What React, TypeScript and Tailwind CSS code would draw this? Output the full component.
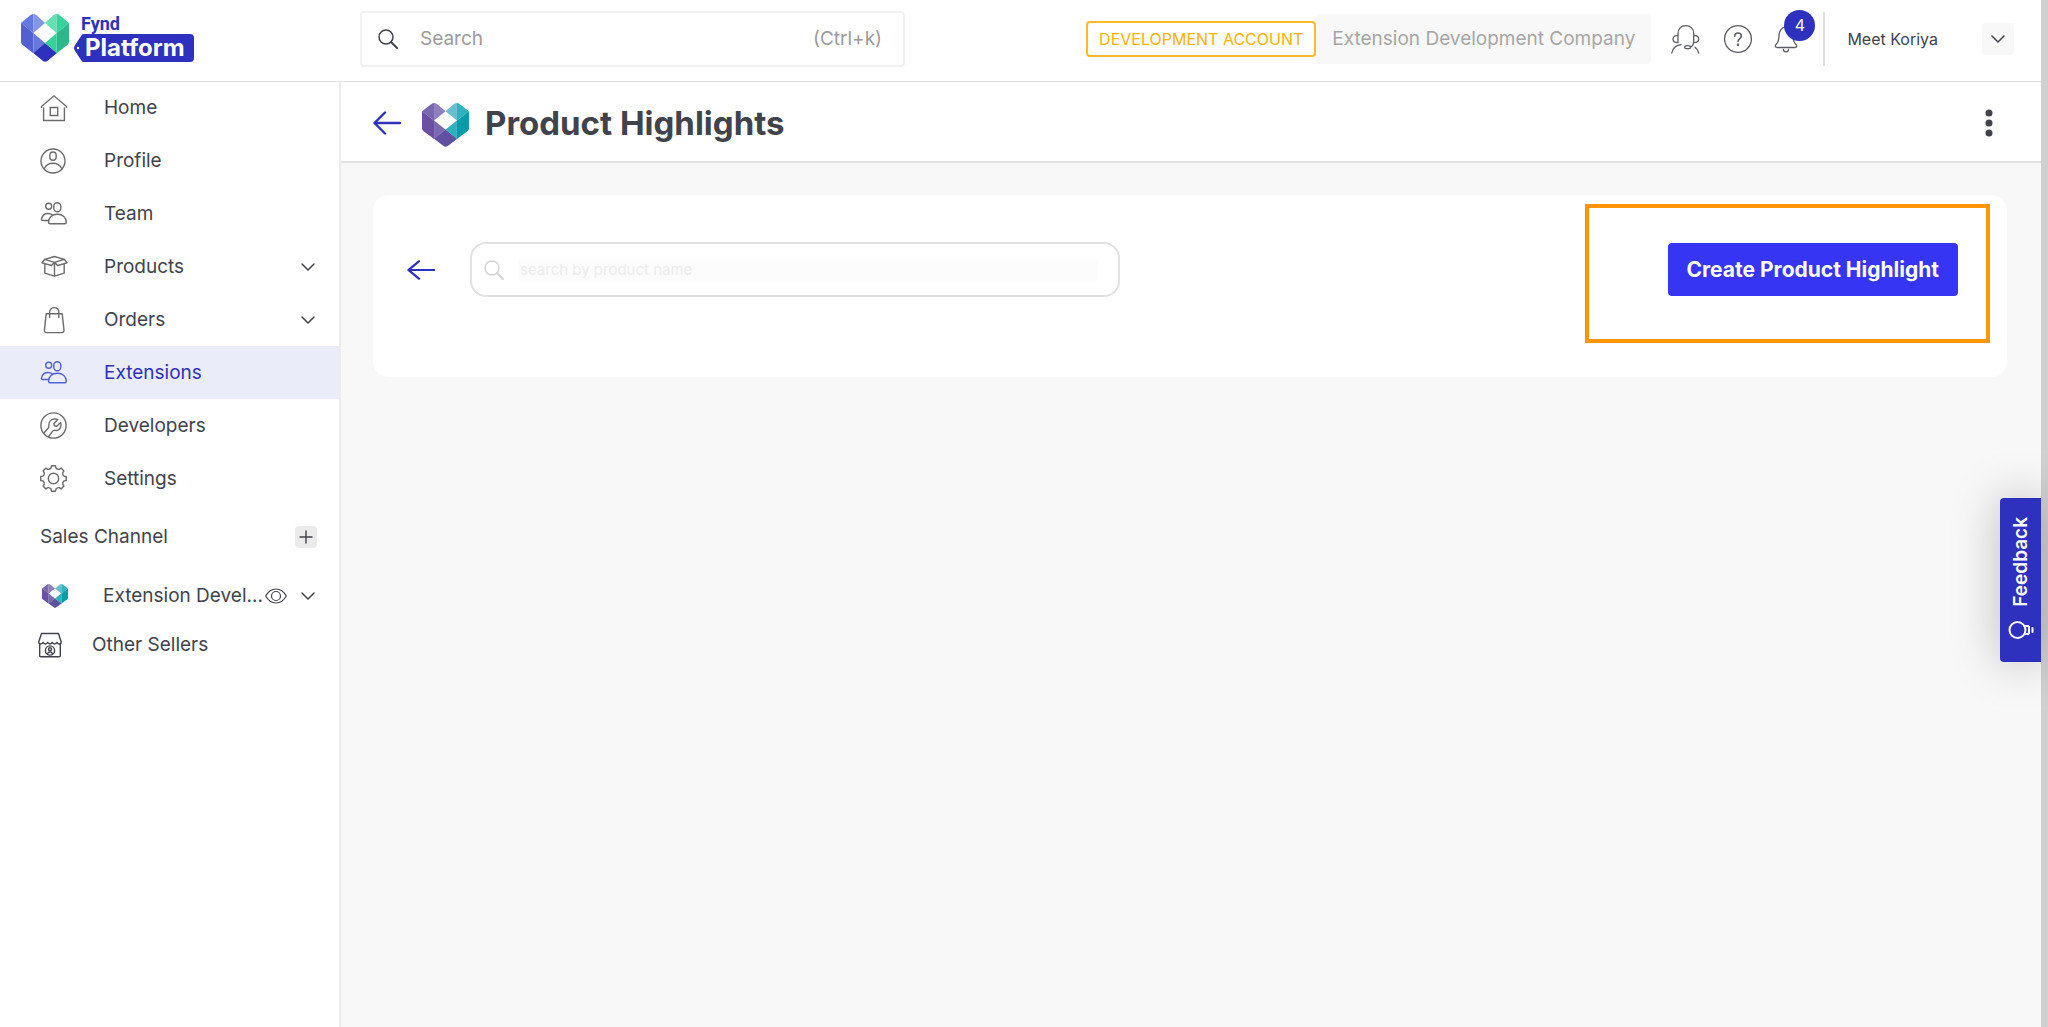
import React, { useState } from 'react';

type IconProps = { className?: string };

const Svg: React.FC<{ size: number; className?: string; width?: string; children: React.ReactNode }> = ({
    size,
    className = '',
    width = '1.4',
    children
}) => (
    <svg
        width={size}
        height={size}
        viewBox={`0 0 ${size} ${size}`}
        fill="none"
        stroke="currentColor"
        strokeWidth={width}
        strokeLinecap="round"
        strokeLinejoin="round"
        className={`shrink-0 ${className}`}
        aria-hidden="true"
    >
        {children}
    </svg>
);

const HomeIcon = () => (
    <Svg size={28}>
        <path d="M1.5 14V12.5L14 1.8l12.500 10.700V14M3.600 13.500v13h20.800v-13M10.300 13.500h7.400v8h-7.400z" strokeLinecap="butt" strokeLinejoin="miter" />
    </Svg>
);

const ProfileIcon = () => (
    <Svg size={28}>
        <circle cx="13" cy="14" r="12" />
        <rect x="9.800" y="5" width="6.400" height="8.200" rx="3.200" />
        <path d="M4.200 21.800C6 18 9.100 16.300 13 16.300s7 1.700 8.800 5.500" />
    </Svg>
);

const TeamIcon = () => (
    <Svg size={28}>
        <circle cx="8.700" cy="6.300" r="3" />
        <rect x="13.800" y="2.700" width="7" height="9" rx="3.500" />
        <path d="M8.500 22.200c0-4.800 3.600-8 8.900-8s8.900 3.200 8.900 8c0 .900-.500 1.500-1.500 1.500H10c-1 0-1.500-.600-1.500-1.500zM8.300 20.500H3c-1.300 0-1.800-.500-1.500-1.700.800-3.300 3.100-5.300 6.500-5.300 1.700 0 3.100.500 4.300 1.400" />
    </Svg>
);

const BoxIcon = () => (
    <Svg size={28}>
        <path d="m14.500 9.300-9.800-3L2 9.800l9.500 2.700 3-3.200 9.800-3L27 9.800l-9.500 2.700-3-3.200M4.700 6.300l9.800-2.800 9.800 2.800M4.800 10.800v9.400l9.700 3 9.700-3v-9.400M14.500 9.500v13.500" />
    </Svg>
);

const BagIcon = () => (
    <Svg size={28}>
        <path d="M6.200 7.800h16l1.800 16.300c.100 1.700-.700 2.500-2.300 2.500H6.700c-1.600 0-2.400-.800-2.300-2.500zM9.600 11.500V6.200c0-2.700 1.900-4.600 4.600-4.600s4.600 1.900 4.600 4.600v5.300" />
    </Svg>
);

const WrenchIcon = () => (
    <Svg size={28}>
        <circle cx="13.500" cy="13.500" r="12.600" />
        <path d="m3.700 21.200 4.800-5.400c.500-.600.400-1.200.300-2.100-.200-3.600 2-6.500 5.500-6.700 1.300-.100 2.500.100 3.500.600L14 11.400l.4 2.400 2.400.500 3.800-3.700c.600 1.300.600 2.700.100 4.100-.900 2.600-3.500 4.200-6.300 3.700-.700-.100-1.100 0-1.500.500l-4.300 5.600" />
    </Svg>
);

const polar = (r: number, deg: number) => {
    const a = (deg * Math.PI) / 180;
    return `${(13.5 + r * Math.sin(a)).toFixed(2)} ${(13.5 - r * Math.cos(a)).toFixed(2)}`;
};

// eight teeth joined by shallow hollows
const gearPath =
    [0, 45, 90, 135, 180, 225, 270, 315]
        .map((t, i) => `${i === 0 ? 'M' : 'L'}${polar(12.9, t - 9)}L${polar(12.9, t + 9)}L${polar(10.8, t + 13)}Q${polar(9.6, t + 22.5)} ${polar(10.8, t + 32)}`)
        .join('') + 'Z';

const GearIcon = () => (
    <Svg size={28}>
        <path d={gearPath} />
        <circle cx="13.500" cy="13.500" r="5.200" />
    </Svg>
);

const ShopIcon = () => (
    <Svg size={26}>
        <path d="M4.500 1.500h17l2.700 8.500c0 1.300-.900 2-2 2s-2-.700-2.300-1.700c-.500 1-1.300 1.700-2.300 1.700s-1.900-.700-2.300-1.700c-.400 1-1.300 1.700-2.300 1.700s-1.900-.700-2.300-1.700c-.400 1-1.300 1.700-2.300 1.700s-1.900-.700-2.300-1.700c-.400 1-1.300 1.700-2.400 1.700s-2-.700-2-2zM2.700 12v11.500c0 .800.400 1.200 1.200 1.200h18.200c.800 0 1.200-.400 1.200-1.200V12" />
        <circle cx="13" cy="18.500" r="4.600" />
        <circle cx="13" cy="17.300" r="1.500" />
        <path d="M10.500 21.700c.600-1.300 1.500-1.700 2.500-1.700s1.900.400 2.500 1.700" />
    </Svg>
);

const ChevronIcon: React.FC<IconProps> = ({ className }) => (
    <Svg size={14} width="1.5" className={className}>
        <path d="m1 4 6 6 6-6" />
    </Svg>
);

const EyeIcon = () => (
    <Svg size={22} width="1.2">
        <path d="M.700 11c2.500-4.500 6-7 10.300-7s7.800 2.500 10.300 7c-2.500 4.500-6 7-10.300 7S3.200 15.500.700 11z" />
        <circle cx="11" cy="11" r="4.500" />
    </Svg>
);

const SearchIcon: React.FC<IconProps> = ({ className }) => (
    <Svg size={20} width="1.5" className={className}>
        <circle cx="8" cy="8" r="7" />
        <path d="m13 13 6 6" strokeWidth="2" />
    </Svg>
);

const BackArrow: React.FC<IconProps> = ({ className = '' }) => (
    <svg viewBox="0 0 28 24" preserveAspectRatio="none" fill="none" stroke="currentColor" strokeWidth="2.400" strokeLinecap="round" strokeLinejoin="round" className={`w-7 ${className}`} aria-hidden="true">
        <path d="M27 12H1.500M12 1.500 1.500 12 12 22.500" />
    </svg>
);

const HeadsetIcon = () => (
    <Svg size={30} width="1.3">
        <path d="M7 18.700V9.500C7 5 10 1.700 14.800 1.700s7.900 3.300 7.900 7.800V17c0 3-1.300 5.400-3.200 6M7 11.300c-3 0-5 1.400-5 3.700s2 3.700 5 3.700M22.700 11.300c3 0 5 1.400 5 3.700s-2 3.700-5 3.700" />
        <ellipse cx="16.600" cy="23.200" rx="3" ry="1.500" />
        <path d="M.800 29c.800-4.500 4-7.500 9.200-8.300M24 23.300c2 1.400 3.200 3.300 3.700 5.700" />
    </Svg>
);

const HelpIcon = () => (
    <Svg size={30} width="1.3">
        <circle cx="15" cy="15" r="13.400" />
        <path d="M11.700 12.300c0-2 1.300-3.300 3.300-3.300s3.300 1.200 3.300 3c0 2.500-3.300 2.700-3.300 5.600" strokeWidth="1.600" />
        <circle cx="15" cy="20.700" r=".6" fill="currentColor" />
    </Svg>
);

const BellIcon = () => (
    <Svg size={30} width="1.3">
        <path d="M8 12c0-5 2.700-9 7-9s7 4 7 9c0 5 .800 6.300 3 8.500 1.200 1.300.800 3-1 3H6c-1.800 0-2.200-1.700-1-3 2.200-2.200 3-3.500 3-8.500zM12.400 25.500c.200 1.500 1.200 2.300 2.600 2.300s2.400-.800 2.600-2.300" />
    </Svg>
);

const BulbIcon = () => (
    <Svg size={28} width="2">
        <circle cx="10.500" cy="14" r="8" />
        <path d="M17.500 10h3.500l1 1v6l-1 1h-3.500M25.500 12v4" />
    </Svg>
);

const fyndColors = ['#6578df', '#8397e6', '#5161d0', '#6578dd', '#2e31be', '#66dfb3', '#38d39c', '#2eb78b', '#37cf9a'];
const extensionColors = ['#7967b0', '#8f7fbd', '#6a4fa3', '#7d68b1', '#61509f', '#67bfcb', '#34b1c1', '#0a9bab', '#2fb0bf'];

const HeartLogo: React.FC<{ colors: string[]; className?: string }> = ({ colors, className }) => (
    <svg viewBox="0 0 144 144" preserveAspectRatio="none" className={`shrink-0 ${className}`} aria-hidden="true">
        <path fill={colors[0]} d="M0 27 28 4q5-4 9-4v57z" />
        <path fill={colors[1]} d="M37 0q5 0 10 4l25 23-35 30z" />
        <path fill={colors[2]} d="M0 27 37 57v61L4 92q-4-4-4-9z" />
        <path fill={colors[3]} d="M37 57 72 87 37 118z" />
        <path fill={colors[4]} d="m72 87 36 30-28 23q-8 6-15 0L37 117z" />
        <path fill={colors[5]} d="M107 0q-5 0-10 4L72 27l35 30z" />
        <path fill={colors[6]} d="M107 0q5 0 9 4l28 23-37 30z" />
        <path fill={colors[7]} d="M144 27v56q0 5-4 9l-33 26V57z" />
        <path fill={colors[8]} d="M107 57 72 87l35 31z" />
    </svg>
);

const PlatformLogo = () => (
    <a href="#" aria-label="Fynd Platform" className="flex items-center shrink-0">
        <HeartLogo colors={fyndColors} className="w-12 h-12" />
        <svg width="122" height="56" viewBox="0 0 122 56" className="ml-1" aria-hidden="true">
            <path d="M8 26q1-2 3-2h106q4 0 4 4v20q0 4-4 4H11q-2 0-3-2l-6.500-10q-1-2 0-4z" fill="#2e31be" />
            <circle cx="5" cy="38" r="1.200" fill="#fff" />
            <text x="8" y="20" fontFamily="Roboto, sans-serif" fontSize="18" fontWeight="700" fill="#2e31be">Fynd</text>
            <text x="12" y="46" fontFamily="Inter, sans-serif" fontSize="24" fontWeight="700" fill="#fff">Platform</text>
        </svg>
    </a>
);

const NAV_ITEMS = [
    { label: 'Home', icon: HomeIcon },
    { label: 'Profile', icon: ProfileIcon },
    { label: 'Team', icon: TeamIcon },
    { label: 'Products', icon: BoxIcon, expandable: true },
    { label: 'Orders', icon: BagIcon, expandable: true },
    { label: 'Extensions', icon: TeamIcon },
    { label: 'Developers', icon: WrenchIcon },
    { label: 'Settings', icon: GearIcon }
];

const Header = () => (
    <header className="relative flex items-center h-[81px] bg-white shadow-[0_1px_0_#e4e4e4]">
        <div className="w-[360px] shrink-0 pl-[21px] pb-1.5">
            <PlatformLogo />
        </div>
        <div className="flex items-center w-[545px] h-14 mb-1 pl-4 pr-[21px] border-2 border-[#f2f2f2] rounded">
            <SearchIcon className="text-[#41434c]" />
            <input
                type="text"
                aria-label="Search"
                placeholder="Search"
                className="flex-1 min-w-0 ml-[22px] outline-none placeholder:text-[#9b9b9b]"
            />
            <span className="text-[#9b9b9b]">(Ctrl+k)</span>
        </div>
        <div className="flex items-center ml-auto mb-1">
            <span className="flex items-center h-9 px-[11px] border-2 border-[#ffb924] rounded text-base text-[#ffb108] whitespace-nowrap">
                DEVELOPMENT ACCOUNT
            </span>
            <span className="flex items-center h-[50px] px-4 rounded bg-[#f8f8f8] text-[#a6a6a6] whitespace-nowrap">
                Extension Development Company
            </span>
            <button type="button" aria-label="Support" className="ml-5 text-[#5c5e66]"><HeadsetIcon /></button>
            <button type="button" aria-label="Help" className="ml-[22px] text-[#5c5e66]"><HelpIcon /></button>
            <button type="button" aria-label="Notifications" className="relative ml-[18px] text-[#5c5e66]">
                <BellIcon />
                <span className="absolute -top-3.5 left-[13px] flex items-center justify-center size-[31px] rounded-full bg-[#2e31be] text-base text-white">4</span>
            </button>
            <div className="w-0.5 h-[54px] ml-[22px] bg-[#dedede]" />
            <span className="ml-[22px] text-base whitespace-nowrap">Meet Koriya</span>
            <button type="button" aria-label="Account menu" className="flex items-center justify-center size-8 ml-11 mr-[27px] rounded bg-[#f8f8f8]">
                <ChevronIcon />
            </button>
        </div>
    </header>
);

const Sidebar = () => (
    <aside className="w-[341px] shrink-0 border-r-2 border-[#ececec] bg-white">
        <nav>
            {NAV_ITEMS.map(({ label, icon: Icon, expandable }) => {
                const active = label === 'Extensions';
                return (
                    <a
                        key={label}
                        href="#"
                        className={`flex items-center h-[53px] pl-10 pr-6 ${active ? 'bg-[#eaecfa] text-[#2e31be]' : ''}`}
                    >
                        <span className={active ? 'text-[#5161d0]' : 'text-[#6b6b6b]'}><Icon /></span>
                        <span className="ml-9">{label}</span>
                        {expandable && <ChevronIcon className="ml-auto" />}
                    </a>
                );
            })}
        </nav>
        <div className="flex items-center justify-between h-16 pl-10 pr-[22px]">
            <span>Sales Channel</span>
            <button type="button" aria-label="Add sales channel" className="flex items-center justify-center size-[22px] rounded-sm bg-[#ebebeb]">
                <Svg size={14}>
                    <path d="M7 1v12M1 7h12" />
                </Svg>
            </button>
        </div>
        <a href="#" className="flex items-center h-[54px] pl-[42px] pr-6">
            <HeartLogo colors={extensionColors} className="w-[26px] h-6" />
            <span className="ml-[35px] mr-0.5 whitespace-nowrap">Extension Devel...</span>
            <EyeIcon />
            <ChevronIcon className="ml-auto" />
        </a>
        <a href="#" className="flex items-center h-11 pl-[37px]">
            <ShopIcon />
            <span className="ml-[29px]">Other Sellers</span>
        </a>
    </aside>
);

export default function App() {
    const [query, setQuery] = useState('');

    return (
        <div className="relative flex flex-col min-h-screen border-r-[7px] border-[#d0d0d0] bg-[#f8f8f8] font-[Inter,sans-serif] text-[19px] leading-6 text-[#41434c]">
            <Header />
            <div className="flex flex-1">
                <Sidebar />
                <main className="flex-1 min-w-0">
                    <div className="flex items-center h-[82px] pt-1 pl-8 pr-11 border-b-2 border-[#e4e4e4] bg-white">
                        <button type="button" aria-label="Back" className="text-[#2e31be]"><BackArrow className="h-6" /></button>
                        <HeartLogo colors={extensionColors} className="w-[47px] h-11 mt-1 ml-[21px]" />
                        <h1 className="ml-4 text-[33px] leading-10 font-bold">Product Highlights</h1>
                        <button type="button" aria-label="More options" className="ml-auto p-1">
                            <svg width="8" height="28" viewBox="0 0 8 28" fill="currentColor" aria-hidden="true">
                                <circle cx="4" cy="4" r="3.500" />
                                <circle cx="4" cy="14" r="3.500" />
                                <circle cx="4" cy="24" r="3.500" />
                            </svg>
                        </button>
                    </div>
                    <section className="flex items-start h-[182px] mt-8 ml-8 mr-[34px] pt-[9px] pl-[34px] pr-[17px] rounded-2xl bg-white">
                        <div className="flex items-center mt-[38px]">
                            <button type="button" aria-label="Back to list" className="text-[#2e31be]"><BackArrow className="h-5" /></button>
                            <label className="flex items-center w-[650px] h-[55px] ml-[35px] px-3 border-2 border-[#e2e2e2] rounded-2xl">
                                <SearchIcon className="text-[#d4d4d4]" />
                                <input
                                    type="text"
                                    value={query}
                                    onChange={(e) => setQuery(e.target.value)}
                                    aria-label="Search by product name"
                                    placeholder="search by product name"
                                    className="flex-1 min-w-0 ml-3.5 mr-2 px-0.5 bg-[#fcfcfc] text-[15px] outline-none placeholder:text-[#ececec]"
                                />
                            </label>
                        </div>
                        <div className="ml-auto pt-[35px] pr-7 pb-[43px] pl-[79px] border-4 border-[#ff9500]">
                            <button type="button" className="block h-[53px] px-[19px] rounded bg-[#3535f3] text-[21px] font-bold text-white whitespace-nowrap">
                                Create Product Highlight
                            </button>
                        </div>
                    </section>
                </main>
            </div>
            <button
                type="button"
                className="absolute right-0 top-[498px] flex flex-col items-center justify-between w-[41px] h-[164px] pt-[19px] pb-[18px] rounded-l bg-[#2e31be] text-white shadow-[0_0_48px_rgba(0,0,0,0.25)]"
            >
                <span className="[writing-mode:vertical-rl] rotate-180 font-semibold">Feedback</span>
                <BulbIcon />
            </button>
        </div>
    );
}
